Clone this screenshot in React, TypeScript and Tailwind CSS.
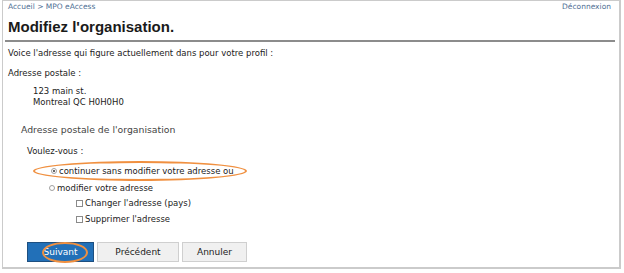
import React from 'react';

const Radio: React.FC<{ checked?: boolean }> = ({ checked }) => (
    <span className="inline-flex items-center justify-center w-[6px] h-[6px] rounded-full border border-[#a0a0a0] bg-white mr-[2px]">
        {checked && <span className="w-[2px] h-[2px] rounded-full bg-[#333]" />}
    </span>
);

const Checkbox: React.FC = () => (
    <span className="inline-block w-[7px] h-[7px] border border-[#8a8a8a] bg-white mr-[2px]" />
);

export default function App() {
    return (
        <div className="w-[624px] h-[273px] bg-white font-['DejaVu_Sans',Verdana,sans-serif]">
            <div className="relative ml-[2px] w-[619px] h-[269px] border-t border-l border-b-2 border-r-2 border-[#cbcbcb] bg-white text-[#222]">
                {/* breadcrumb + logout */}
                <div className="flex justify-between pl-[5px] pr-[8px] pt-[1px] text-[7.5px] leading-[10px] text-[#4f6f94]">
                    <span>Accueil &gt; MPO eAccess</span>
                    <span>Déconnexion</span>
                </div>
                <h1 className="ml-[2px] mr-[4px] px-[3px] mt-[6px] pb-[4px] text-[15px] leading-[18px] font-bold text-[#1a1a1a] border-b-2 border-[#8c8c8c] font-['Liberation_Sans',Arial,sans-serif]">
                    Modifiez l'organisation.
                </h1>

                <div className="px-[5px] text-[8.5px] leading-[10px]">
                    <p className="mt-[6px]">Voice l'adresse qui figure actuellement dans pour votre profil :</p>
                    <p className="mt-[10px]">Adresse postale :</p>
                    <div className="mt-[8px] pl-[25px] leading-[11px]">
                        <div>123 main st.</div>
                        <div>Montreal QC H0H0H0</div>
                    </div>

                    <div className="mt-[16px] pl-[13px] text-[9.3px] leading-[12px] text-[#444]">Adresse postale de l'organisation</div>
                    <div className="mt-[10px] pl-[19px]">Voulez-vous :</div>

                    <div className="relative mt-[10px] pl-[43px] flex items-center h-[10px]">
                        <Radio checked />
                        <span>continuer sans modifier votre adresse ou</span>
                        <span className="absolute left-[25px] top-[-5px] w-[214px] h-[20px] rounded-[50%] border-2 border-[#f09040]" />
                    </div>
                    <div className="mt-[7px] pl-[41px] flex items-center h-[10px]">
                        <Radio />
                        <span>modifier votre adresse</span>
                    </div>
                    <div className="mt-[5px] pl-[68px] flex items-center h-[10px]">
                        <Checkbox />
                        <span>Changer l'adresse (pays)</span>
                    </div>
                    <div className="mt-[6px] pl-[68px] flex items-center h-[10px]">
                        <Checkbox />
                        <span>Supprimer l'adresse</span>
                    </div>

                    <div className="mt-[18px] pl-[19px] flex gap-[3px] text-[9px]">
                        <button className="relative w-[67px] h-[20px] bg-[#2270b8] border border-[#1d4f80] text-white">
                            Suivant
                            <span className="absolute left-[14px] top-[-1px] w-[46px] h-[21px] rounded-[50%] border-2 border-[#f09040]" />
                        </button>
                        <button className="w-[82px] h-[20px] bg-[#f0f0f0] border border-[#cfcfcf] text-[#222]">Précédent</button>
                        <button className="w-[65px] h-[20px] bg-[#f0f0f0] border border-[#cfcfcf] text-[#222]">Annuler</button>
                    </div>
                </div>
            </div>
        </div>
    );
}
